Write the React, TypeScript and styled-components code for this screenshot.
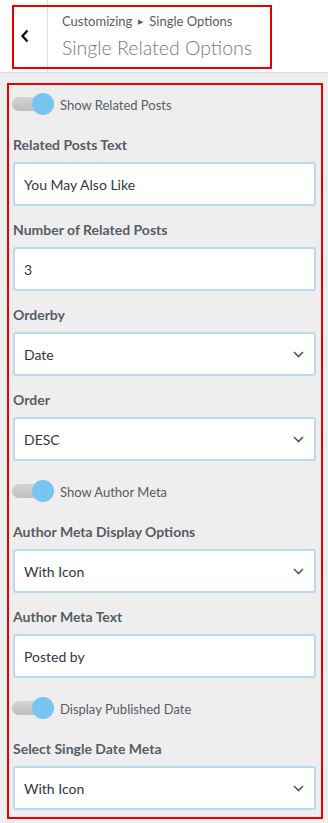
import React from 'react'
import styled, { createGlobalStyle } from 'styled-components'

const GlobalStyle = createGlobalStyle`
  html, body {
    margin: 0;
    padding: 0;
    background: #eeeeee;
    font-family: Lato, 'Open Sans', sans-serif;
    color: #555d66;
  }
  * {
    box-sizing: border-box;
  }
`

const Page = styled.div`
  width: 328px;
  min-height: 823px;
  background: #eeeeee;
`

const Header = styled.header`
  position: relative;
  display: flex;
  height: 73px;
  background: #ffffff;
  border-bottom: 1px solid #dddddd;
`

const Highlight = styled.div`
  position: absolute;
  left: 12px;
  top: 5px;
  width: 260px;
  height: 64px;
  border: 2px solid #e60000;
  pointer-events: none;
`

const BackButton = styled.button`
  display: flex;
  align-items: center;
  justify-content: center;
  width: 48px;
  padding: 0 0 0 2px;
  background: transparent;
  border: none;
  border-right: 1px solid #dddddd;
  cursor: pointer;
`

const TitleBlock = styled.div`
  display: flex;
  flex-direction: column;
  padding: 12px 0 0 14px;
`

const Breadcrumb = styled.span`
  font-size: 13px;
  line-height: 18px;
  color: #555d66;
`

const Arrow = styled.span`
  font-size: 7px;
  margin: 0 6px;
  vertical-align: 2px;
`

const Title = styled.h1`
  margin: 5px 0 0;
  font-size: 19.5px;
  line-height: 26px;
  font-weight: 300;
  color: #6f7a85;
`

const Panel = styled.section`
  margin: 10px 5px 0 7px;
  padding: 3px 5px 7px 4px;
  border: 2px solid #e60000;
`

const ToggleRow = styled.label`
  display: flex;
  align-items: center;
  gap: 6px;
  height: 27px;
  padding-top: 6px;
  margin: 0 0 20px -1px;
  font-size: 13px;
  color: #555d66;
`

const Track = styled.span`
  position: relative;
  display: inline-block;
  width: 42px;
  height: 21px;

  &::before {
    content: '';
    position: absolute;
    left: 0;
    top: 3px;
    width: 34px;
    height: 14px;
    border-radius: 7px;
    background: linear-gradient(#d4d4d4, #bfbfbf);
  }

  &::after {
    content: '';
    position: absolute;
    right: 0;
    top: -1px;
    width: 22px;
    height: 22px;
    border-radius: 50%;
    background: #77c5f0;
  }
`

const Control = styled.div`
  margin-bottom: 14px;

  &:last-child {
    margin-bottom: 0;
  }
`

const Label = styled.div`
  font-size: 14px;
  line-height: 20px;
  font-weight: 700;
  color: #555d66;
  margin-bottom: 7px;
`

const Field = styled.div`
  display: flex;
  align-items: center;
  justify-content: space-between;
  height: 44px;
  padding: 0 10px 0 9px;
  background: #ffffff;
  border: 2px solid #b8dbef;
  border-radius: 3px;
  font-size: 14px;
  color: #32373c;
`

const Chevron = () => (
  <svg width='11' height='7' viewBox='0 0 11 7'>
    <path d='M1 1l4.5 4.5L10 1' fill='none' stroke='#555' strokeWidth='1.6' />
  </svg>
)

type Item =
  | { kind: 'toggle'; text: string }
  | { kind: 'input'; label: string; value: string }
  | { kind: 'select'; label: string; value: string }

const items: Item[] = [
  { kind: 'toggle', text: 'Show Related Posts' },
  { kind: 'input', label: 'Related Posts Text', value: 'You May Also Like' },
  { kind: 'input', label: 'Number of Related Posts', value: '3' },
  { kind: 'select', label: 'Orderby', value: 'Date' },
  { kind: 'select', label: 'Order', value: 'DESC' },
  { kind: 'toggle', text: 'Show Author Meta' },
  { kind: 'select', label: 'Author Meta Display Options', value: 'With Icon' },
  { kind: 'input', label: 'Author Meta Text', value: 'Posted by' },
  { kind: 'toggle', text: 'Display Published Date' },
  { kind: 'select', label: 'Select Single Date Meta', value: 'With Icon' },
]

const App: React.FC = () => (
  <Page>
    <GlobalStyle />
    <Header>
      <BackButton aria-label='Back'>
        <svg width='10' height='14' viewBox='0 0 10 14'>
          <path d='M7.5 1.5L2.5 7l5 5.5' fill='none' stroke='#111' strokeWidth='2.4' />
        </svg>
      </BackButton>
      <TitleBlock>
        <Breadcrumb>
          Customizing<Arrow>▶</Arrow>Single Options
        </Breadcrumb>
        <Title>Single Related Options</Title>
      </TitleBlock>
      <Highlight />
    </Header>
    <Panel>
      {items.map((item, i) =>
        item.kind === 'toggle' ? (
          <ToggleRow key={i}>
            <Track />
            {item.text}
          </ToggleRow>
        ) : (
          <Control key={i}>
            <Label>{item.label}</Label>
            <Field>
              {item.value}
              {item.kind === 'select' && <Chevron />}
            </Field>
          </Control>
        )
      )}
    </Panel>
  </Page>
)

export default App
